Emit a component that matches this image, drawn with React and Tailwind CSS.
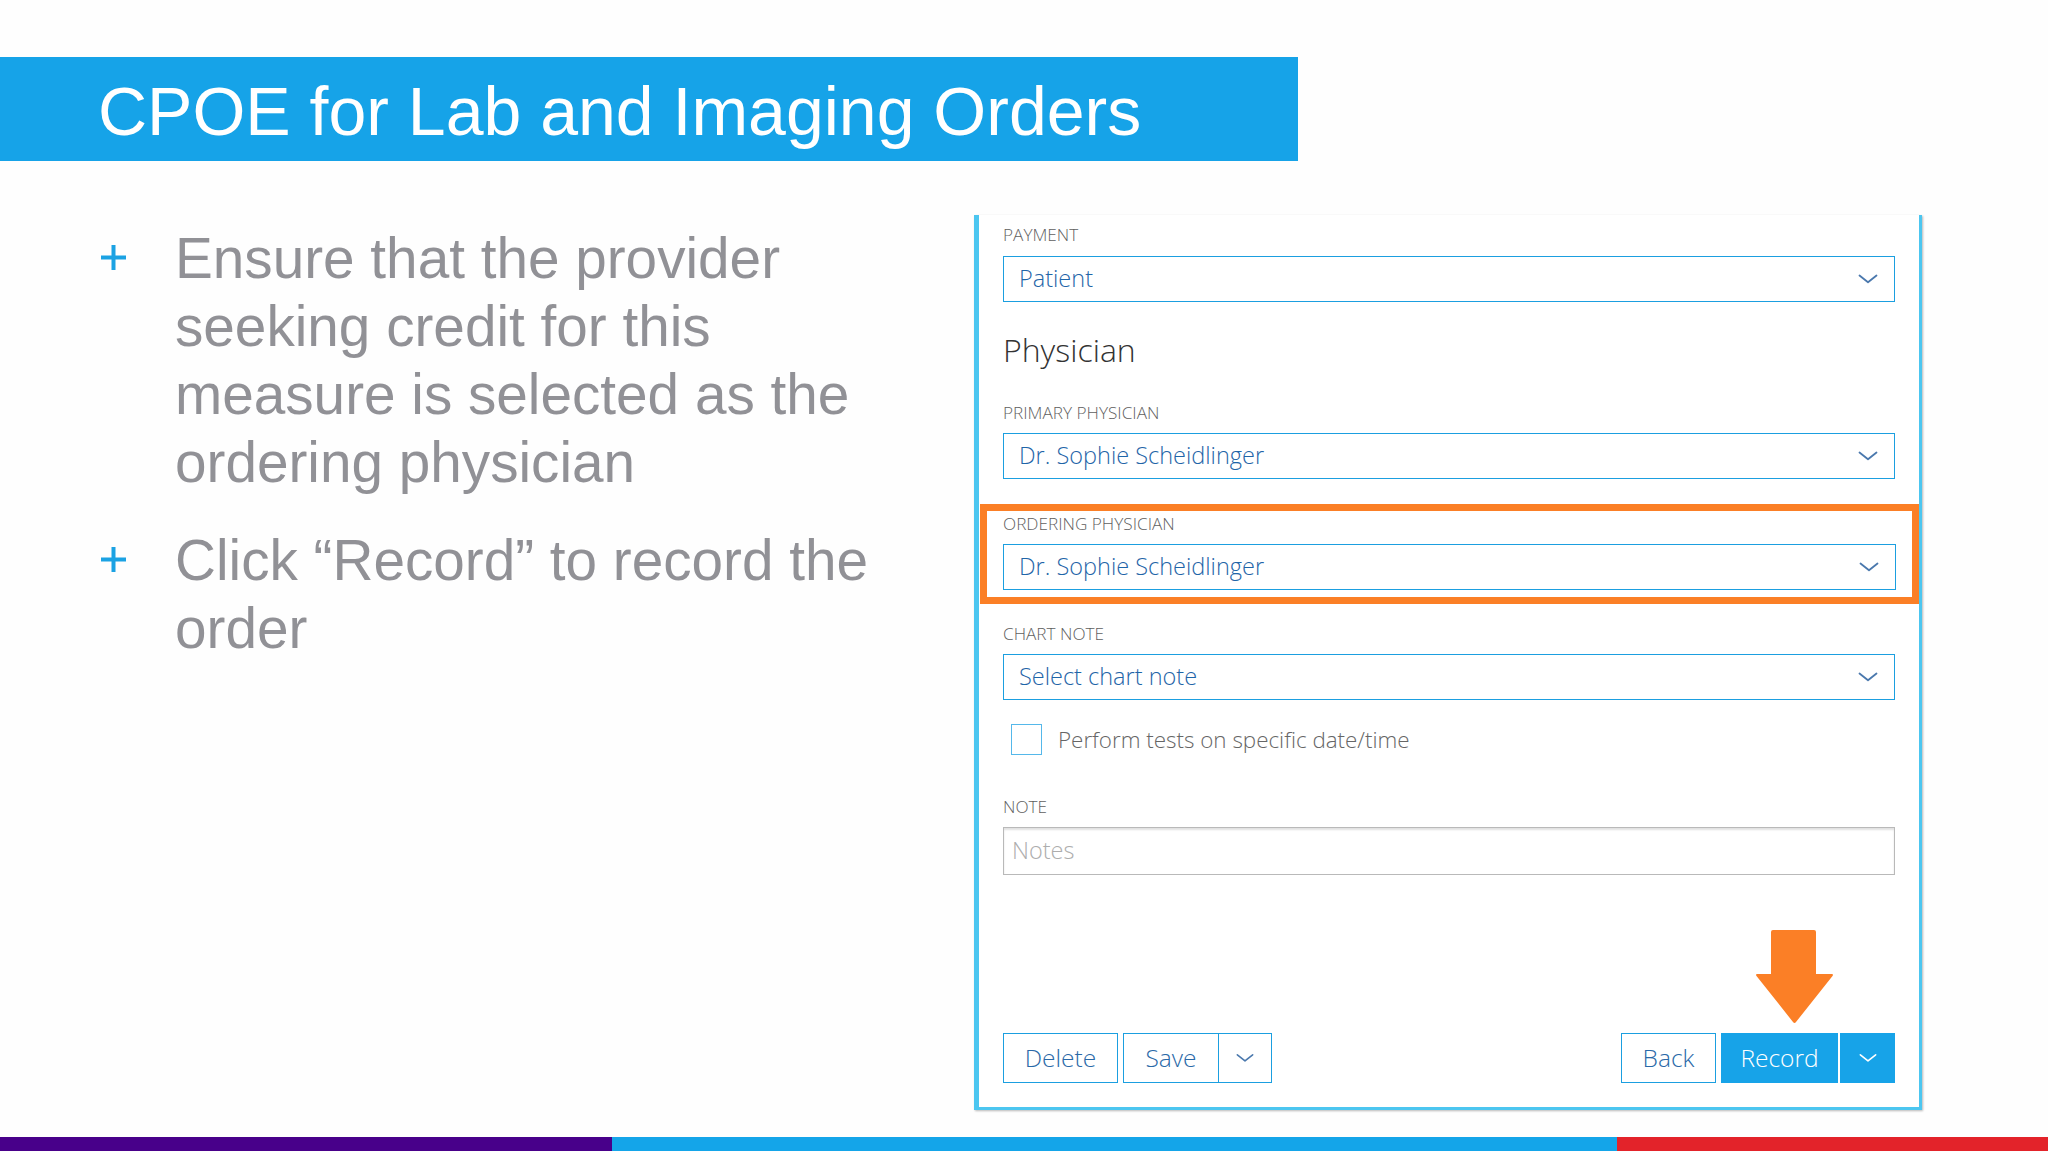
import React from "react";

const Chevron = ({ color = "#4a78ad", w = 20 }) => (
  <svg width={w} height="10" viewBox="0 0 20 10" fill="none">
    <path d="M1.5 1.5 L10 8.2 L18.5 1.5" stroke={color} strokeWidth="1.8" strokeLinecap="round" strokeLinejoin="round" />
  </svg>
);

const Plus = () => (
  <svg width="27" height="27" viewBox="0 0 27 27">
    <rect x="11.5" y="1" width="4" height="25" fill="#1ba2e3" />
    <rect x="1" y="11.5" width="25" height="4" fill="#1ba2e3" />
  </svg>
);

const Label = ({ children, className = "" }) => (
  <div className={"text-[17.2px] leading-[20px] text-[#5f5f5f] uppercase " + className}>{children}</div>
);

const Select = ({ value, className = "" }) => (
  <div className={"h-[46px] border-[1.5px] border-[#1b9fe0] bg-white flex items-center justify-between pl-[15px] pr-[16px] " + className}>
    <span className="text-[23.5px] text-[#1f65a8]">{value}</span>
    <Chevron />
  </div>
);

export default function App() {
  return (
    <div className="w-[2048px] h-[1152px] bg-[#fefefe] flex flex-col overflow-hidden">
      <div className="mt-[57px] h-[104px] w-[1298px] bg-[#16a3e8] flex items-center pl-[98px]">
        <h1 className="text-[68px] leading-none text-white font-['Liberation_Sans',Arial,sans-serif] pt-[4px]">
          CPOE for Lab and Imaging Orders
        </h1>
      </div>

      <div className="mt-[54px] flex">
        <div className="w-[974px] pl-[100px] pt-[10px] font-['Liberation_Sans',Arial,sans-serif] text-[#919196] text-[56.7px] leading-[68px]">
          <div className="flex">
            <div className="w-[75px] pt-[19px]"><Plus /></div>
            <p className="w-[730px]">Ensure that the provider seeking credit for this measure is selected as the ordering physician</p>
          </div>
          <div className="flex mt-[30px]">
            <div className="w-[75px] pt-[19px]"><Plus /></div>
            <p className="w-[730px]">Click “Record” to record the order</p>
          </div>
        </div>

        <div className="w-[948px] h-[895px] bg-white border-l-[5px] border-r-[3px] border-b-[3px] border-[#4cc6f0] shadow-[1px_1px_2px_rgba(0,0,0,0.28)] flex flex-col font-['Open_Sans','Noto_Sans',sans-serif] font-light">
          <div className="px-6">
            <Label className="mt-[10px]">Payment</Label>
            <Select value="Patient" className="mt-[11px]" />
            <div className="mt-[28px] text-[32px] leading-[40px] text-[#333]">Physician</div>
            <Label className="mt-[33px]">Primary Physician</Label>
            <Select value="Dr. Sophie Scheidlinger" className="mt-[10px]" />
          </div>

          <div className="mt-[25px] ml-px border-[7px] border-[#fb7f26] px-[16px] pt-[3px] pb-[7px]">
            <Label>Ordering Physician</Label>
            <Select value="Dr. Sophie Scheidlinger" className="mt-[10px]" />
          </div>

          <div className="px-6">
            <Label className="mt-[20px]">Chart Note</Label>
            <Select value="Select chart note" className="mt-[10px]" />
            <div className="mt-[23px] flex items-center">
              <div className="ml-[8px] w-[31px] h-[31px] border-[1.5px] border-[#55b8ea] bg-white" />
              <span className="ml-[16px] text-[22.4px] text-[#666]">Perform tests on specific date/time</span>
            </div>
            <Label className="mt-[40px]">Note</Label>
            <div className="mt-[10px] h-[48px] border-[1.5px] border-[#b9b9b9] shadow-[inset_0_2px_2px_rgba(0,0,0,0.12)] flex items-center pl-[8px]">
              <span className="text-[23.5px] text-[#adadad]">Notes</span>
            </div>
          </div>

          <div className="mt-auto pb-[24px] px-6 flex justify-between items-end">
            <div className="flex gap-[5px]">
              <button className="h-[50px] w-[115px] border-[1.5px] border-[#1b9fe0] bg-white text-[24.5px] text-[#2a69a8]">Delete</button>
              <div className="flex h-[50px] border-[1.5px] border-[#1b9fe0] bg-white">
                <button className="w-[94px] text-[24.5px] text-[#2a69a8]">Save</button>
                <div className="w-[53px] border-l-[1.5px] border-[#1b9fe0] flex items-center justify-center">
                  <Chevron w={18} />
                </div>
              </div>
            </div>
            <div className="flex gap-[5px]">
              <button className="h-[50px] w-[95px] border-[1.5px] border-[#1b9fe0] bg-white text-[24.5px] text-[#2a69a8]">Back</button>
              <div className="flex h-[50px] gap-[2px]">
                <div className="relative">
                  <button className="h-[50px] w-[117px] bg-[#17a3e8] text-[24.5px] text-white">Record</button>
                  <svg className="absolute left-[34px] top-[-103px]" width="79" height="94" viewBox="0 0 79 94">
                    <path d="M16 2 Q16 0 18 0 H59 Q61 0 61 2 V44 H76.5 Q79 44 77.5 46 L41 92 Q39.5 94 38 92 L1.5 46 Q0 44 2.5 44 H16 Z" fill="#fb7f26" />
                  </svg>
                </div>
                <div className="w-[55px] h-[50px] bg-[#17a3e8] flex items-center justify-center">
                  <Chevron color="#ffffff" w={18} />
                </div>
              </div>
            </div>
          </div>
        </div>
      </div>

      <div className="mt-[27px] h-[14px] flex">
        <div className="w-[612px] bg-[#48008a]" />
        <div className="w-[1005px] bg-[#14a5e9]" />
        <div className="flex-1 bg-[#e3232a]" />
      </div>
    </div>
  );
}
